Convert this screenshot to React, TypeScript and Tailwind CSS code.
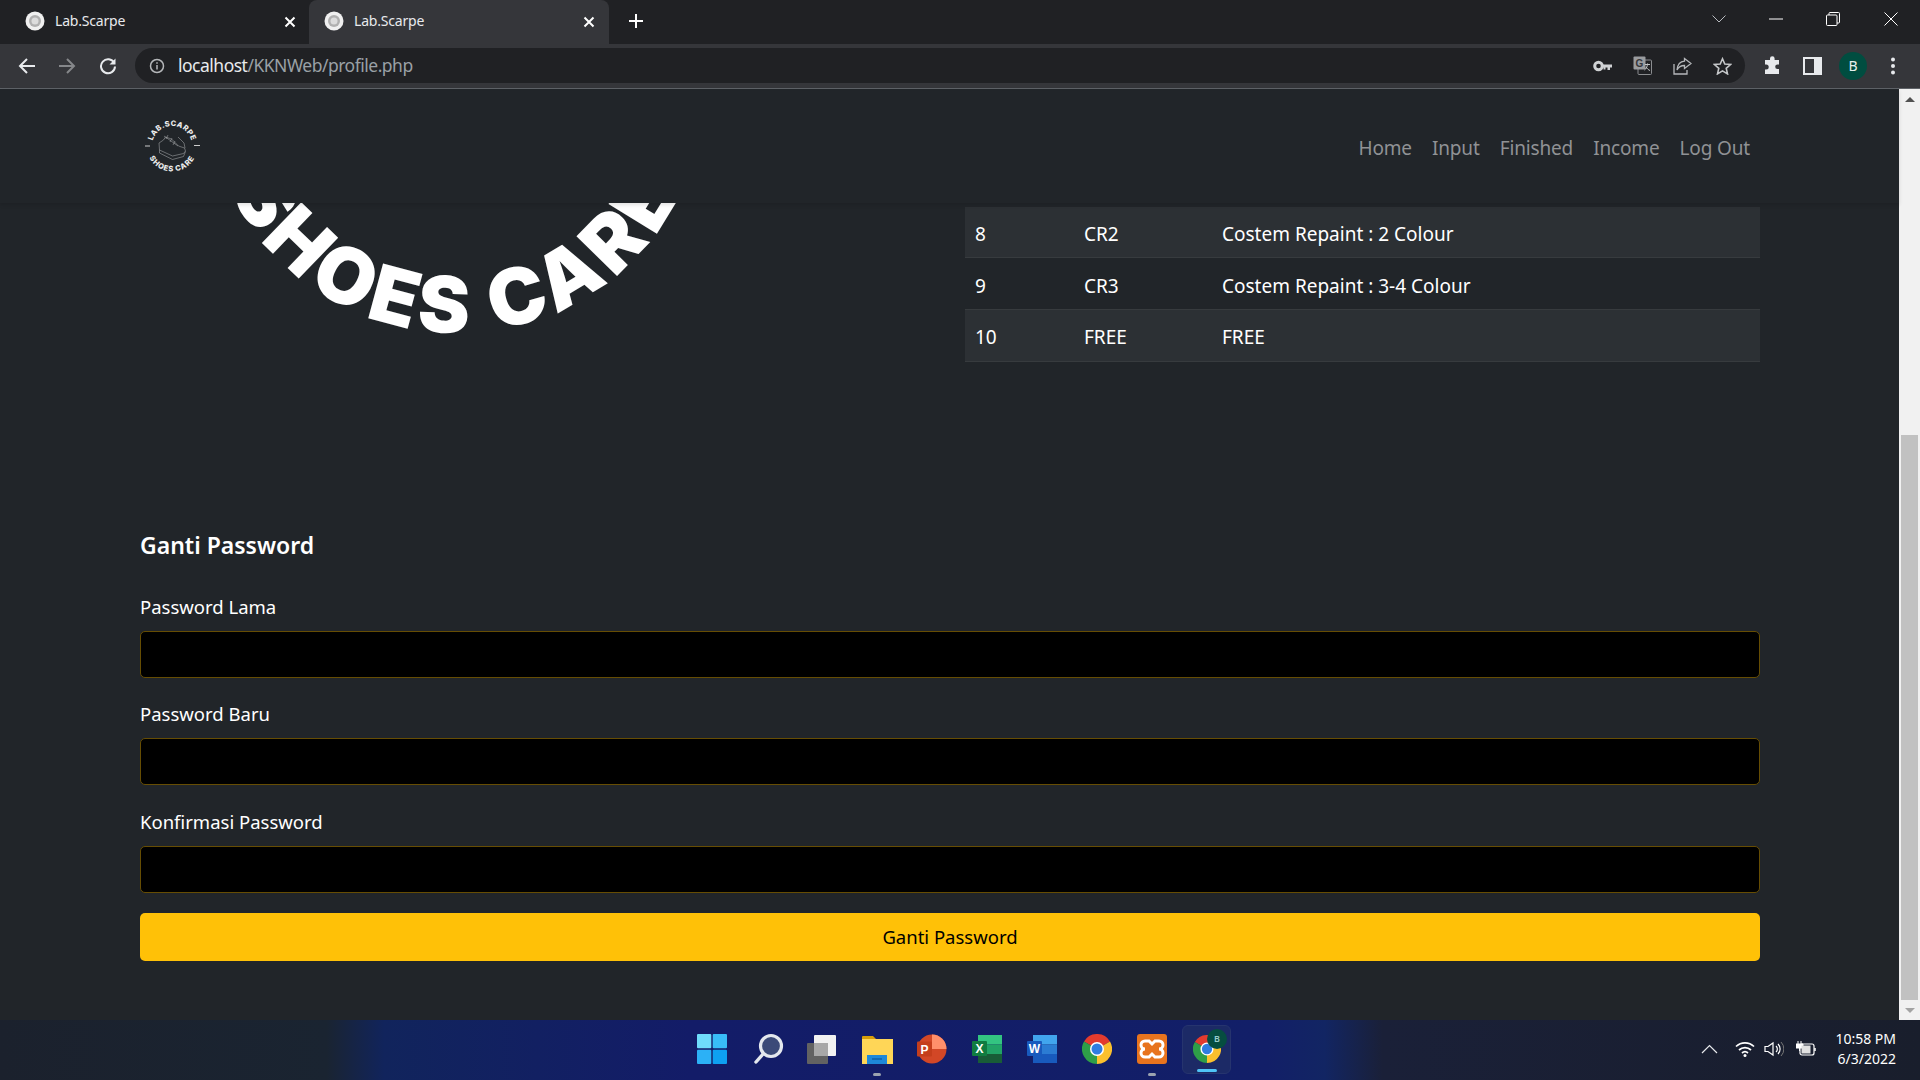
const font = "font-['Noto_Sans',sans-serif]"

function Favicon() {
  return (
    <svg width="20" height="20" viewBox="0 0 20 20" className="shrink-0">
      <circle cx="10" cy="10" r="9.500" fill="#f0f0f0" />
      <circle cx="10" cy="10" r="6" fill="#b0b0b0" />
      <circle cx="10" cy="10" r="3.500" fill="#dcdcdc" />
    </svg>
  )
}

function CloseIcon() {
  return (
    <svg width="12" height="12" viewBox="0 0 12 12" className="mt-[2px] shrink-0">
      <path d="M1.500 1.500 10.500 10.500M10.500 1.500 1.500 10.500" stroke="#fff" strokeWidth="2" />
    </svg>
  )
}

function Tab({ active }: { active?: boolean }) {
  return (
    <div className={active ? 'flex h-[44px] w-[300px] items-center rounded-t-lg bg-[#35363a] pr-[14px] pb-[3px] pl-[15px]' : 'flex h-[44px] w-[309px] items-center pr-[13px] pb-[3px] pl-[25px]'}>
      <Favicon />
      <span className="ml-[10px] flex-1 text-[14px] tracking-[-0.2px] text-[#e8eaed]">Lab.Scarpe</span>
      <CloseIcon />
    </div>
  )
}

function WindowControls() {
  return (
    <div className="ml-auto flex h-[44px] items-center pb-[7px]">
      <svg width="16" height="10" viewBox="0 0 16 10" className="mr-[42px]">
        <path d="M1.500 1.500 8 8l6.500-6.500" fill="none" stroke="#b9bcc0" strokeWidth="1" />
      </svg>
      <svg width="14" height="2" viewBox="0 0 14 2" className="mr-[43px]">
        <path d="M0 1h14" stroke="#fff" strokeWidth="1" />
      </svg>
      <svg width="14" height="14" viewBox="0 0 14 14" className="mr-[44px]">
        <rect x="0.500" y="3" width="10.500" height="10.500" rx="1" fill="none" stroke="#fff" />
        <path d="M3 3V1.500a1 1 0 0 1 1-1h8.500a1 1 0 0 1 1 1V10a1 1 0 0 1-1 1H11" fill="none" stroke="#fff" />
      </svg>
      <svg width="14" height="14" viewBox="0 0 14 14" className="mr-[22px]">
        <path d="M.5.500l13 13M13.500.500l-13 13" stroke="#fff" strokeWidth="1" />
      </svg>
    </div>
  )
}

function Toolbar() {
  return (
    <div className="flex h-[45px] shrink-0 items-center border-b border-[#5f6368] bg-[#35363a] pb-px">
      <svg width="18" height="18" viewBox="0 0 18 18" className="ml-[18px]">
        <path d="M17 9H2.500M9 2 2 9l7 7" fill="none" stroke="#e8eaed" strokeWidth="2" />
      </svg>
      <svg width="18" height="18" viewBox="0 0 18 18" className="ml-[22px]">
        <path d="M1 9h14.500M9 2l7 7-7 7" fill="none" stroke="#85878a" strokeWidth="2" />
      </svg>
      <svg width="18" height="18" viewBox="0 0 18 18" className="ml-[23px]">
        <path d="M15.200 6A7 7 0 1 0 16 9.500" fill="none" stroke="#e8eaed" strokeWidth="2" />
        <path d="M16.500 1.500v6h-6z" fill="#e8eaed" />
      </svg>
      <div className="ml-[18px] flex h-[35px] w-[1610px] items-center rounded-full bg-[#202124] pl-[14px]">
        <svg width="16" height="16" viewBox="0 0 16 16">
          <circle cx="8" cy="8" r="6.500" fill="none" stroke="#b5b7ba" strokeWidth="1.500" />
          <path d="M8 7v4.500M8 4.200v1.500" stroke="#b5b7ba" strokeWidth="1.500" />
        </svg>
        <span className="ml-[13px] text-[17.5px] tracking-[-0.5px] text-[#e8eaed]">
          localhost<span className="text-[#9aa0a6]">/KKNWeb/profile.php</span>
        </span>
        <div className="ml-auto flex items-center gap-[21px] pr-[13px]">
          <svg width="19" height="12" viewBox="0 0 19 12">
            <circle cx="5.500" cy="6" r="3.800" fill="none" stroke="#d0d2d4" strokeWidth="3" />
            <path d="M9 4.500h10v3h-2v2.500h-2.500V7.500H12.500v2H10.500V7.500H9z" fill="#d0d2d4" />
          </svg>
          <svg width="19" height="19" viewBox="0 0 19 19">
            <rect x="5" y="4" width="13.500" height="14.500" rx="1" fill="none" stroke="#8b8d90" />
            <rect x="0.500" y="0.500" width="12" height="13" rx="1" fill="#9a9c9f" />
            <text x="2.500" y="11" fontSize="10" fontWeight="700" fill="#35363a" fontFamily="Liberation Sans, sans-serif">G</text>
            <path d="M12 8.500h5M14.500 7.500c0 3-1.500 5.500-3 6.500M13 11c1 1.500 2.500 3 4 3.500" fill="none" stroke="#c4c6c8" strokeWidth="1" />
          </svg>
          <svg width="19" height="18" viewBox="0 0 19 18">
            <path d="M1 7v10h13v-4" fill="none" stroke="#b5b7ba" strokeWidth="1.300" />
            <path d="M11.500 1.500 18 6.500l-6.500 5V8.500C8 8.500 5.500 10 4 13c.5-5 3-8.500 7.500-8.800z" fill="none" stroke="#b5b7ba" strokeWidth="1.300" />
          </svg>
          <svg width="19" height="18" viewBox="0 0 19 18">
            <path d="M9.500 1.800 11.800 7l5.700.5-4.300 3.800 1.300 5.600-5-3-5 3 1.300-5.600L1.500 7.500 7.200 7z" fill="none" stroke="#c4c6c8" strokeWidth="1.600" />
          </svg>
        </div>
      </div>
      <svg width="19" height="19" viewBox="0 0 19 19" className="ml-[18px]">
        <path d="M7 2.500a2.300 2.300 0 0 1 4.600 0V4H16v4.500h-1.500a2.300 2.300 0 0 0 0 4.600H16V18H2v-4.500h1.200a2.500 2.500 0 0 0 0-5H2V4h5z" fill="#e8eaed" />
      </svg>
      <svg width="19" height="18" viewBox="0 0 19 18" className="ml-[21px]">
        <rect x="1" y="1" width="17" height="16" fill="none" stroke="#e8eaed" strokeWidth="2" />
        <rect x="11" y="1" width="7" height="16" fill="#e8eaed" />
      </svg>
      <div className="ml-[17px] flex h-[28px] w-[28px] items-center justify-center rounded-full bg-[#004d40] text-[14px] text-[#e8f0ee]">B</div>
      <svg width="6" height="18" viewBox="0 0 6 18" className="ml-[23px]">
        <circle cx="3" cy="2.500" r="2" fill="#e8eaed" />
        <circle cx="3" cy="9" r="2" fill="#e8eaed" />
        <circle cx="3" cy="15.500" r="2" fill="#e8eaed" />
      </svg>
    </div>
  )
}

function SmallLogo() {
  return (
    <svg width="56" height="54" viewBox="0 0 56 54" className="ml-[4px]">
      <defs>
        <path id="logo-top" d="M8 27a20 20 0 0 1 40 0" />
        <path id="logo-bottom" d="M2.500 27a25.500 25.500 0 0 0 51 0" />
      </defs>
      <text fontSize="7.500" fontWeight="800" fill="#ececec" fontFamily="Inter, sans-serif" letterSpacing="0.400">
        <textPath href="#logo-top" startOffset="50%" textAnchor="middle">LAB.SCARPE</textPath>
      </text>
      <text fontSize="7.500" fontWeight="800" fill="#ececec" fontFamily="Inter, sans-serif" letterSpacing="0.700">
        <textPath href="#logo-bottom" startOffset="50%" textAnchor="middle">SHOES CARE</textPath>
      </text>
      <path d="M1 27h5M50 26.500h6" stroke="#ccc" strokeWidth="1" />
      <path d="M15 24l.5 7 13 6 11-2.500 2-2.500-1-3-6-2-7-7-6-2-2 3zM15.500 31l0 3 13 6.500 11-3 2-5M20 17l14 10M24 16l-2 4M28 19l-2 4M31 22l-2 4M34 18l6 6 1 5" fill="none" stroke="#b4b6b8" strokeWidth="0.500" />
    </svg>
  )
}

function Navbar() {
  return (
    <nav className="relative z-10 flex h-[114px] shrink-0 items-center bg-[#212529] pr-[149px] pl-[140px] shadow-[0_2px_4px_rgba(0,0,0,0.12)]">
      <SmallLogo />
      <div className="mt-[4px] ml-auto flex gap-[20px] text-[19px] tracking-[-0.15px] text-[#909295]">
        <span>Home</span>
        <span>Input</span>
        <span>Finished</span>
        <span>Income</span>
        <span>Log Out</span>
      </div>
    </nav>
  )
}

function BigLogo() {
  return (
    <div className="h-[320px] w-[825px] overflow-hidden">
      <svg width="660" height="170" viewBox="0 0 660 170">
        <defs>
          <path id="arc-big" d="M66 -120a250 250 0 0 0 500 0" />
        </defs>
        <text fontSize="78" fontWeight="900" fill="#fff" fontFamily="Inter, sans-serif" letterSpacing="6">
          <textPath href="#arc-big" startOffset="50%" textAnchor="middle">SHOES CARE</textPath>
        </text>
      </svg>
    </div>
  )
}

const rows = [
  { no: '8', code: 'CR2', name: 'Costem Repaint : 2 Colour', striped: true },
  { no: '9', code: 'CR3', name: 'Costem Repaint : 3-4 Colour', striped: false },
  { no: '10', code: 'FREE', name: 'FREE', striped: true },
]

function PriceTable() {
  return (
    <table className="mt-[4px] h-[155px] w-[795px] table-fixed border-collapse text-[19px] text-white">
      <colgroup>
        <col className="w-[108px]" />
        <col className="w-[138px]" />
        <col />
      </colgroup>
      <tbody>
        {rows.map((row) => (
          <tr key={row.no} className={row.striped ? 'border-b border-[#373b3e] bg-[#2c3034]' : 'border-b border-[#373b3e]'}>
            <td className="pt-[4px] pl-[10px]">{row.no}</td>
            <td className="pt-[4px] pl-[11px]">{row.code}</td>
            <td className="pt-[4px] pl-[11px]">{row.name}</td>
          </tr>
        ))}
      </tbody>
    </table>
  )
}

function Field({ label }: { label: string }) {
  return (
    <div className="mb-[20.3px]">
      <label className="mb-[8px] block h-[32px] text-[18.5px] leading-[32px] text-white">{label}</label>
      <input type="password" className="block h-[47px] w-full rounded-[5px] border border-[#664d03] bg-black" />
    </div>
  )
}

function Scrollbar() {
  return (
    <div className="flex w-[21px] shrink-0 flex-col items-center bg-[#f1f1f1]">
      <div className="flex h-[21px] items-center justify-center">
        <div className="h-0 w-0 border-x-[5px] border-b-[5px] border-x-transparent border-b-[#505050]" />
      </div>
      <div className="mt-[325px] h-[565px] w-[17px] bg-[#c1c1c1]" />
      <div className="flex h-[20px] items-center justify-center">
        <div className="h-0 w-0 border-x-[5px] border-t-[5px] border-x-transparent border-t-[#a3a3a3]" />
      </div>
    </div>
  )
}

function Chrome({ size = 30 }: { size?: number }) {
  return (
    <svg width={size} height={size} viewBox="0 0 24 24">
      <path d="M12 12 1.600 6A12 12 0 0 1 22.400 6z" fill="#e33b2e" />
      <path d="M12 12 22.400 6A12 12 0 0 1 12 24z" fill="#fbc02d" />
      <path d="M12 12 12 24A12 12 0 0 1 1.600 6z" fill="#2e9e48" />
      <circle cx="12" cy="12" r="5.600" fill="#fff" />
      <circle cx="12" cy="12" r="4.400" fill="#2f7de1" />
    </svg>
  )
}

function OfficeIcon({ letter, badge, shades }: { letter: string; badge: string; shades: string[] }) {
  return (
    <svg width="30" height="30" viewBox="0 0 30 30">
      <rect x="6" y="1" width="24" height="9.500" fill={shades[0]} />
      <rect x="6" y="10.500" width="24" height="9.500" fill={shades[1]} />
      <rect x="6" y="20" width="24" height="9" fill={shades[2]} />
      <rect x="0" y="7" width="15" height="15" rx="1" fill={badge} />
      <text x="7.500" y="19" textAnchor="middle" fontSize="12" fontWeight="700" fill="#fff" fontFamily="Liberation Sans, sans-serif">{letter}</text>
    </svg>
  )
}

function Taskbar() {
  return (
    <div className="relative flex h-[60px] shrink-0 items-center bg-[linear-gradient(90deg,#1b212d_0%,#1a2431_17%,#11245c_20%,#131c68_36%,#121f68_66%,#122563_69%,#1a2038_72%,#191e2c_100%)] pb-[2px]">
      <div className="ml-[697px] flex h-[50px] items-center">
        <div className="flex w-[55px] justify-start">
          <svg width="30" height="30" viewBox="0 0 30 30">
            <rect width="14.300" height="14.300" x="0" y="0" rx="1" fill="#6fdcfb" />
            <rect width="14.300" height="14.300" x="15.700" y="0" rx="1" fill="#38bdf8" />
            <rect width="14.300" height="14.300" x="0" y="15.700" rx="1" fill="#2cb1f6" />
            <rect width="14.300" height="14.300" x="15.700" y="15.700" rx="1" fill="#0ea0f2" />
          </svg>
        </div>
        <div className="flex w-[55px] justify-start pl-[2px]">
          <svg width="30" height="32" viewBox="0 0 30 32">
            <circle cx="17" cy="13" r="10.500" fill="#3b4a78" stroke="#e4e8ee" strokeWidth="3.200" />
            <path d="M9 21 2 29" stroke="#e4e8ee" strokeWidth="3.400" strokeLinecap="round" />
          </svg>
        </div>
        <div className="flex w-[55px] justify-start">
          <svg width="30" height="30" viewBox="0 0 30 30">
            <rect x="0" y="9" width="21" height="21" rx="1" fill="#626262" />
            <rect x="7" y="1" width="22" height="21" rx="1" fill="#f2f2f2" />
            <rect x="7" y="9" width="14" height="13" fill="#a8a8a8" />
          </svg>
        </div>
        <div className="relative flex w-[55px] justify-start">
          <svg width="31" height="30" viewBox="0 0 31 30">
            <path d="M0 3a1 1 0 0 1 1-1h10l3 3h-14z" fill="#d79e0a" />
            <rect x="0" y="5" width="31" height="25" fill="#ffd657" />
            <rect x="5" y="21" width="20" height="9" fill="#1e88d9" />
            <path d="M10 25h10" stroke="#0e5fa8" strokeWidth="1.500" />
          </svg>
          <div className="absolute top-[39px] left-[11px] h-[3px] w-[8px] rounded-full bg-[#9ba3b0]" />
        </div>
        <div className="flex w-[55px] justify-start">
          <svg width="30" height="30" viewBox="0 0 30 30">
            <circle cx="15" cy="15" r="14.500" fill="#d24726" />
            <path d="M15 .500A14.500 14.500 0 0 1 29.500 15H15z" fill="#ff8f6b" />
            <rect x="0" y="7.500" width="15" height="15" rx="1" fill="#c43e1c" />
            <text x="7.500" y="19.500" textAnchor="middle" fontSize="12" fontWeight="700" fill="#fff" fontFamily="Liberation Sans, sans-serif">P</text>
          </svg>
        </div>
        <div className="flex w-[55px] justify-start">
          <OfficeIcon letter="X" badge="#107c41" shades={['#33c481', '#21a366', '#185c37']} />
        </div>
        <div className="flex w-[55px] justify-start">
          <OfficeIcon letter="W" badge="#185abd" shades={['#41a5ee', '#2b7cd3', '#185abd']} />
        </div>
        <div className="flex w-[55px] justify-start">
          <Chrome />
        </div>
        <div className="relative flex w-[55px] justify-start">
          <svg width="30" height="30" viewBox="0 0 30 30">
            <rect width="30" height="30" rx="3" fill="#e8741e" />
            <path d="M8 7h4l3 3 3-3h4a3 3 0 0 1 0 8 3 3 0 0 1 0 8h-4l-3-3-3 3H8a3 3 0 0 1 0-8 3 3 0 0 1 0-8z" fill="none" stroke="#fff" strokeWidth="3" />
          </svg>
          <div className="absolute top-[39px] left-[11px] h-[3px] w-[8px] rounded-full bg-[#9ba3b0]" />
        </div>
        <div className="relative -ml-[10px] flex h-[49px] w-[49px] items-center justify-center rounded-md border border-[#26346e] bg-[#1c2a66]">
          <Chrome size={28} />
          <div className="absolute top-[3px] right-[3px] flex h-[20px] w-[20px] items-center justify-center rounded-full bg-[#064d40] text-[9px] font-semibold text-[#9cc]">B</div>
          <div className="absolute bottom-[1px] left-[14px] h-[3px] w-[20px] rounded-full bg-[#4fc3f7]" />
        </div>
      </div>
      <div className="ml-auto flex items-center pr-[24px]">
        <svg width="17" height="10" viewBox="0 0 17 10" className="mr-[17px]">
          <path d="M1 9l7.500-7.500L16 9" fill="none" stroke="#e8eaed" strokeWidth="1.200" />
        </svg>
        <svg width="20" height="16" viewBox="0 0 20 16" className="mr-[9px]">
          <path d="M1 5.500a13 13 0 0 1 18 0M4 9a9 9 0 0 1 12 0M7 12a4.500 4.500 0 0 1 6 0" fill="none" stroke="#fff" strokeWidth="1.700" />
          <circle cx="10" cy="14.500" r="1.500" fill="#fff" />
        </svg>
        <svg width="20" height="16" viewBox="0 0 20 16" className="mr-[12px]">
          <path d="M1 5.500h3L9 2v12L4 10.500H1z" fill="none" stroke="#fff" strokeWidth="1.200" />
          <path d="M12 5a4 4 0 0 1 0 6M14 3a7 7 0 0 1 0 10" fill="none" stroke="#fff" strokeWidth="1.200" />
          <path d="M17 1a10 10 0 0 1 0 14" fill="none" stroke="#777" strokeWidth="1" />
        </svg>
        <svg width="20" height="16" viewBox="0 0 20 16" className="mr-[19px]">
          <path d="M2 0v3M5 0v3M0 3h7v4H0zM3.500 7v3" fill="#fff" stroke="#fff" strokeWidth="1" />
          <rect x="4" y="3" width="14" height="11" rx="2" fill="none" stroke="#fff" strokeWidth="1.200" />
          <rect x="5.500" y="4.500" width="9" height="8" fill="#e0e0e0" />
          <path d="M19 7v3" stroke="#fff" strokeWidth="1.500" />
        </svg>
        <div className="text-right text-[14px] leading-[20px] text-white">
          <div>10:58 PM</div>
          <div>6/3/2022</div>
        </div>
      </div>
    </div>
  )
}

export default function App() {
  return (
    <div className={`flex h-screen w-full flex-col overflow-hidden bg-[#202124] ${font}`}>
      <div className="flex h-[44px] shrink-0 items-center">
        <Tab />
        <Tab active />
        <svg width="16" height="16" viewBox="0 0 16 16" className="mb-[3px] ml-[19px]">
          <path d="M8 1v14M1 8h14" stroke="#fff" strokeWidth="2" />
        </svg>
        <WindowControls />
      </div>
      <Toolbar />
      <div className="flex min-h-0 flex-1">
        <main className="flex min-w-0 flex-1 flex-col bg-[#212529]">
          <Navbar />
          <div className="min-h-0 flex-1 overflow-hidden pr-[139px] pl-[140px]">
            <div className="flex">
              <BigLogo />
              <PriceTable />
            </div>
            <h2 className="mt-[4px] mb-[28px] text-[23px] leading-[36px] font-semibold text-white">Ganti Password</h2>
            <Field label="Password Lama" />
            <Field label="Password Baru" />
            <Field label="Konfirmasi Password" />
            <button type="button" className="block h-[48px] w-full rounded-[5px] bg-[#ffc107] text-[18.5px] text-black">Ganti Password</button>
          </div>
        </main>
        <Scrollbar />
      </div>
      <Taskbar />
    </div>
  )
}
